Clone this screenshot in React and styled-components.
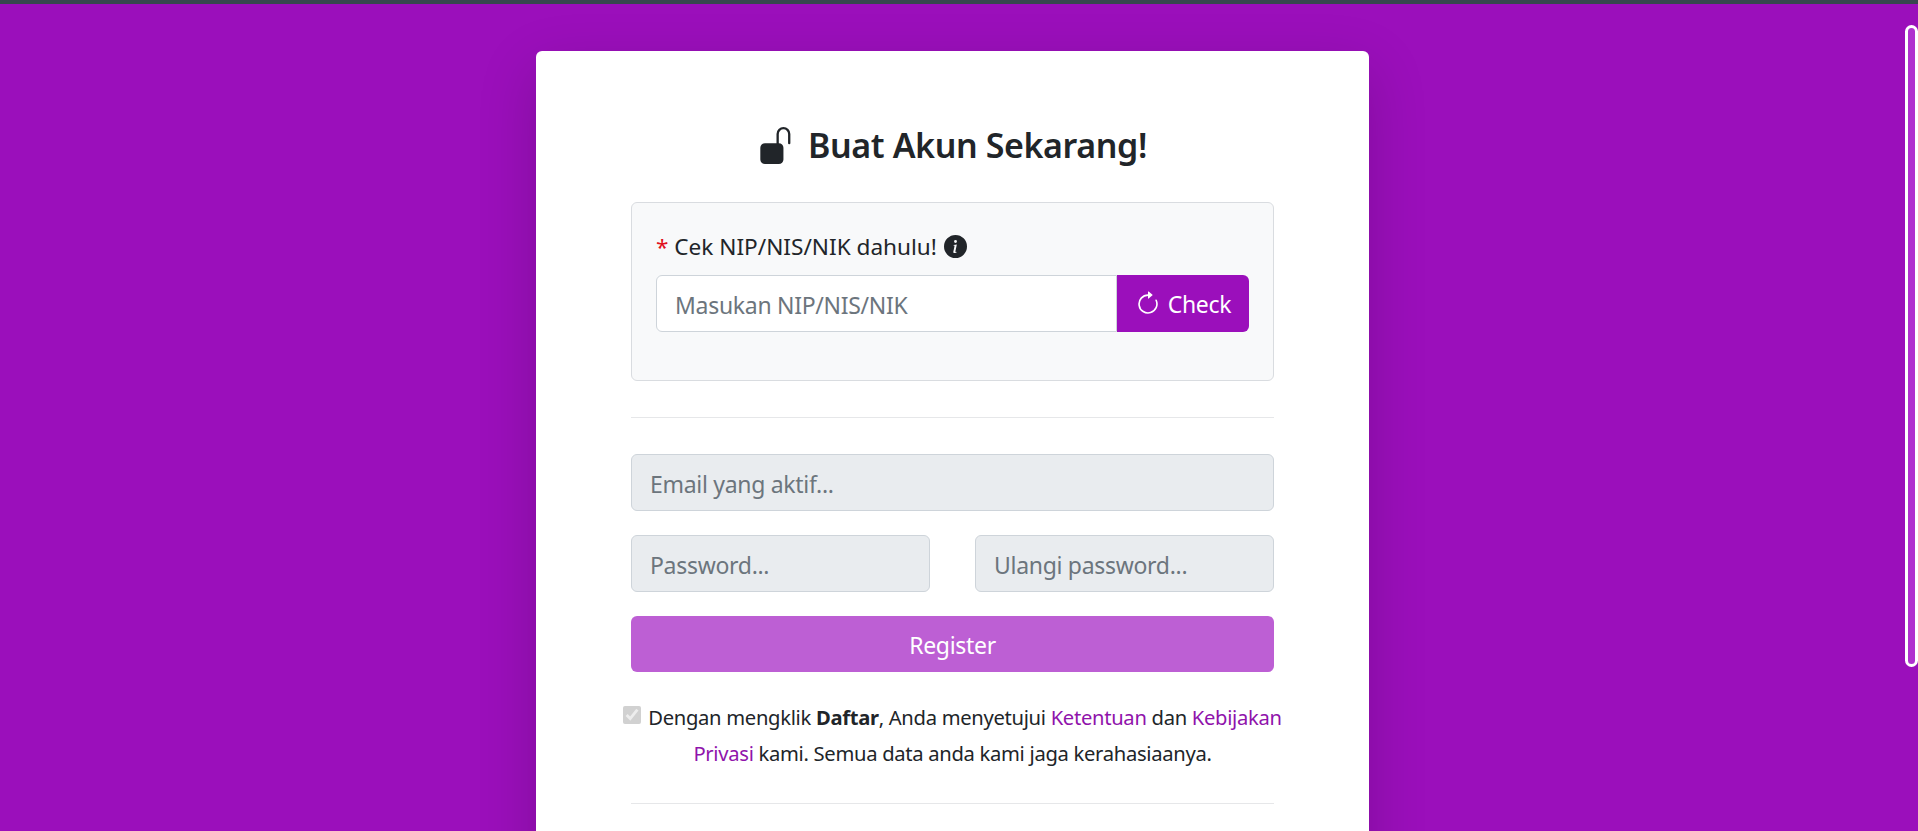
import React from "react";
import styled, { createGlobalStyle } from "styled-components";
import { BsUnlockFill, BsInfoCircleFill, BsArrowClockwise } from "react-icons/bs";

const GlobalStyle = createGlobalStyle`
  * { box-sizing: border-box; }
  html, body { margin: 0; height: 100%; overflow: hidden; }
  body {
    background: #9b0fbb;
    color: #212529;
    font-family: "Noto Sans", "Open Sans", sans-serif;
    font-size: 23px;
  }
`;

const Page = styled.div`
  position: relative;
  height: 831px;
  overflow: hidden;
`;

const TopBar = styled.div`
  height: 4px;
  background: #37474f;
`;

const Scrollbar = styled.div`
  position: absolute;
  top: 25px;
  right: 0;
  width: 13px;
  height: 642px;
  border: 3px solid #fff;
  border-radius: 7px;
  background: #b030cf;
`;

const Card = styled.main`
  width: 833px;
  margin: 47px 0 0 536px;
  padding: 70px 95px 0;
  height: 900px;
  background: #fff;
  border-radius: 6px;
  box-shadow: 0 19px 58px rgba(0, 0, 0, 0.175);
`;

const Title = styled.h1`
  display: flex;
  align-items: center;
  justify-content: center;
  gap: 13px;
  margin: 0 0 33px;
  height: 48px;
  font-size: 34px;
  font-weight: 600;
  letter-spacing: -0.4px;
  svg { font-size: 37px; }
`;

const CheckBox = styled.section`
  height: 179px;
  padding: 23px 24px;
  background: #f8f9fa;
  border: 1px solid #d9dce0;
  border-radius: 6px;
`;

const CheckLabel = styled.div`
  display: flex;
  align-items: center;
  gap: 7px;
  height: 40px;
  margin-bottom: 9px;
  font-size: 22.6px;
  svg { font-size: 23px; }
`;

const Required = styled.span`
  color: #e01020;
`;

const InputGroup = styled.div`
  display: flex;
  height: 57px;
`;

const TextInput = styled.input`
  flex: 1;
  min-width: 0;
  width: 100%;
  height: 57px;
  padding: 2px 18px 0;
  font: inherit;
  letter-spacing: -0.3px;
  color: #212529;
  background: ${(p) => (p.disabled ? "#e9ecef" : "#fff")};
  border: 1px solid #ced4da;
  border-radius: ${(p) => (p.$grouped ? "6px 0 0 6px" : "6px")};
  outline: none;
  &::placeholder { color: #6c757d; opacity: 1; }
`;

const CheckButton = styled.button`
  display: flex;
  align-items: center;
  justify-content: center;
  gap: 7px;
  width: 132px;
  flex-shrink: 0;
  font: inherit;
  letter-spacing: -0.3px;
  color: #fff;
  background: #9b0fbb;
  border: none;
  border-radius: 0 6px 6px 0;
  svg { font-size: 26px; }
`;

const Divider = styled.hr`
  height: 1px;
  margin: 36px 0;
  border: none;
  background: #e6e7e9;
`;

const FormRow = styled.div`
  display: grid;
  grid-template-columns: 1fr 1fr;
  gap: 45px;
  margin-top: 24px;
`;

const RegisterButton = styled.button`
  display: block;
  width: 100%;
  height: 56px;
  margin-top: 24px;
  padding-top: 2px;
  font: inherit;
  letter-spacing: -0.3px;
  color: #fff;
  background: #bd5fd4;
  border: none;
  border-radius: 6px;
`;

const Terms = styled.p`
  margin: 27px -11px 0;
  font-size: 20.2px;
  line-height: 36px;
  text-align: center;
  letter-spacing: -0.3px;
`;

const TermsCheck = styled.input`
  width: 18px;
  height: 18px;
  margin: 0 7px 0 0;
  vertical-align: 1px;
`;

const TermsLink = styled.a`
  color: #9013ab;
  text-decoration: none;
`;

const BottomDivider = styled(Divider)`
  margin: 32px 0 0;
`;

export default function App() {
  return (
    <Page>
      <GlobalStyle />
      <TopBar />
      <Card>
        <Title>
          <BsUnlockFill />
          Buat Akun Sekarang!
        </Title>
        <CheckBox>
          <CheckLabel>
            <span>
              <Required>*</Required> Cek NIP/NIS/NIK dahulu!
            </span>
            <BsInfoCircleFill />
          </CheckLabel>
          <InputGroup>
            <TextInput $grouped placeholder="Masukan NIP/NIS/NIK" />
            <CheckButton>
              <BsArrowClockwise />
              Check
            </CheckButton>
          </InputGroup>
        </CheckBox>
        <Divider />
        <TextInput disabled placeholder="Email yang aktif..." />
        <FormRow>
          <TextInput disabled placeholder="Password..." />
          <TextInput disabled placeholder="Ulangi password..." />
        </FormRow>
        <RegisterButton>Register</RegisterButton>
        <Terms>
          <TermsCheck type="checkbox" checked disabled readOnly />
          Dengan mengklik <b>Daftar</b>, Anda menyetujui <TermsLink>Ketentuan</TermsLink> dan{" "}
          <TermsLink>Kebijakan Privasi</TermsLink> kami. Semua data anda kami jaga kerahasiaanya.
        </Terms>
        <BottomDivider />
      </Card>
      <Scrollbar />
    </Page>
  );
}
